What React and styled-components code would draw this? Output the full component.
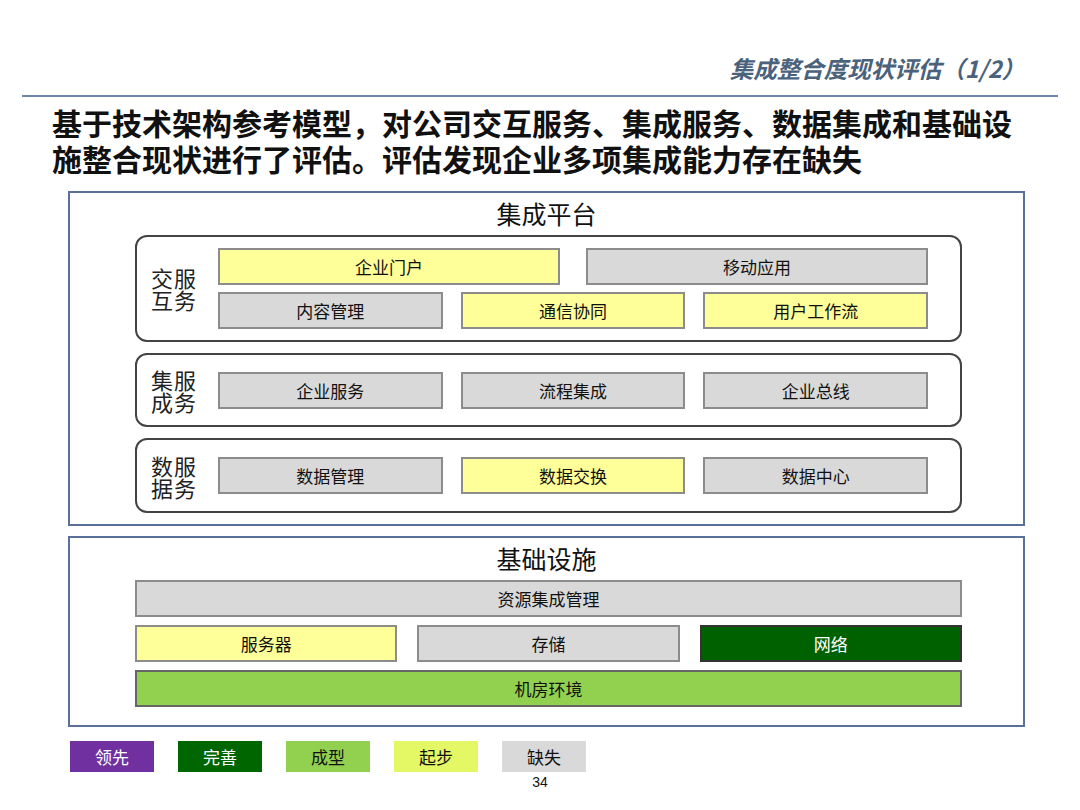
import React from "react";
import styled, { createGlobalStyle } from "styled-components";

const G = createGlobalStyle`
  body{margin:0;background:#fff;font-family:"Noto Sans CJK SC","Liberation Sans",sans-serif;}
`;
const Page = styled.div`width:1080px;height:810px;position:relative;overflow:hidden;`;
const Top = styled.div`height:95px;display:flex;justify-content:flex-end;align-items:flex-end;padding-right:55px;box-sizing:border-box;padding-bottom:10px;`;
const Title = styled.div`font-size:23.5px;font-weight:700;font-style:italic;color:#4b627c;`;
const Rule = styled.div`margin:0 22px;height:2px;background:#6a87a8;`;
const Head = styled.div`margin:7px 0 0 52px;font-size:30px;font-weight:700;line-height:36px;color:#111;white-space:nowrap;`;
const Frame = styled.div`
  margin:${p=>p.mt}px 55px 0 68px;border:2px solid #5a6f9a;height:${p=>p.h}px;box-sizing:border-box;
  display:flex;flex-direction:column;padding:0 61px 0 65px;
`;
const FrameTitle = styled.div`text-align:center;font-size:25px;line-height:40px;color:#111;margin-left:-65px;margin-right:-61px;margin-bottom:2px;`;
const Group = styled.div`
  border:2px solid #444;border-radius:12px;height:${p=>p.h}px;box-sizing:border-box;margin-bottom:11px;
  display:flex;align-items:center;padding:0 32px 0 14px;
`;
const Label = styled.div`width:67px;font-size:22px;line-height:22px;color:#222;display:grid;grid-template-columns:23px 23px;column-gap:0;`;
const Rows = styled.div`flex:1;display:flex;flex-direction:column;gap:7px;`;
const Row = styled.div`display:grid;grid-template-columns:repeat(${p=>p.n},1fr);column-gap:${p=>p.gap}px;margin-bottom:${p=>p.mb||0}px;`;
const Cell = styled.div`
  height:${p=>p.h||37}px;box-sizing:border-box;border:2px solid ${p=>p.bd||"#8c8c8c"};background:${p=>p.bg};
  color:${p=>p.fg||"#111"};display:flex;align-items:center;justify-content:center;font-size:17px;
`;
const Legend = styled.div`display:flex;margin:14px 0 0 70px;gap:24px;`;
const Chip = styled.div`width:84px;height:31px;background:${p=>p.bg};color:${p=>p.fg};display:flex;align-items:center;justify-content:center;font-size:17px;`;
const Num = styled.div`text-align:center;font-family:"Liberation Sans",sans-serif;font-size:14px;margin-top:2px;color:#111;`;

const Y="#ffff99", Gr="#d9d9d9";
const L = ({a})=> <Label>{a.split("").map((c,i)=><span key={i}>{c}</span>)}</Label>;

export default function App(){
  return <Page><G/>
    <Top><Title>集成整合度现状评估（1/2）</Title></Top>
    <Rule/>
    <Head>基于技术架构参考模型，对公司交互服务、集成服务、数据集成和基础设<br/>施整合现状进行了评估。评估发现企业多项集成能力存在缺失</Head>
    <Frame mt={15} h={335}>
      <FrameTitle>集成平台</FrameTitle>
      <Group h={109}>
        <L a="交服互务"/>
        <Rows>
          <Row n={2} gap={26}><Cell bg={Y}>企业门户</Cell><Cell bg={Gr}>移动应用</Cell></Row>
          <Row n={3} gap={18}><Cell bg={Gr}>内容管理</Cell><Cell bg={Y}>通信协同</Cell><Cell bg={Y}>用户工作流</Cell></Row>
        </Rows>
      </Group>
      <Group h={76}>
        <L a="集服成务"/>
        <Rows><Row n={3} gap={18}><Cell bg={Gr}>企业服务</Cell><Cell bg={Gr}>流程集成</Cell><Cell bg={Gr}>企业总线</Cell></Row></Rows>
      </Group>
      <Group h={76}>
        <L a="数服据务"/>
        <Rows><Row n={3} gap={18}><Cell bg={Gr}>数据管理</Cell><Cell bg={Y}>数据交换</Cell><Cell bg={Gr}>数据中心</Cell></Row></Rows>
      </Group>
    </Frame>
    <Frame mt={10} h={191}>
      <FrameTitle>基础设施</FrameTitle>
      <Row n={1} gap={0} mb={8}><Cell bg={Gr}>资源集成管理</Cell></Row>
      <Row n={3} gap={20} mb={8}><Cell bg={Y}>服务器</Cell><Cell bg={Gr}>存储</Cell><Cell bg="#006100" fg="#fff" bd="#333">网络</Cell></Row>
      <Row n={1} gap={0}><Cell bg="#92d050" bd="#666">机房环境</Cell></Row>
    </Frame>
    <Legend>
      <Chip bg="#7030a0" fg="#fff">领先</Chip>
      <Chip bg="#006600" fg="#fff">完善</Chip>
      <Chip bg="#92d050" fg="#111">成型</Chip>
      <Chip bg="#e4f866" fg="#111">起步</Chip>
      <Chip bg="#d9d9d9" fg="#111">缺失</Chip>
    </Legend>
    <Num>34</Num>
  </Page>;
}
